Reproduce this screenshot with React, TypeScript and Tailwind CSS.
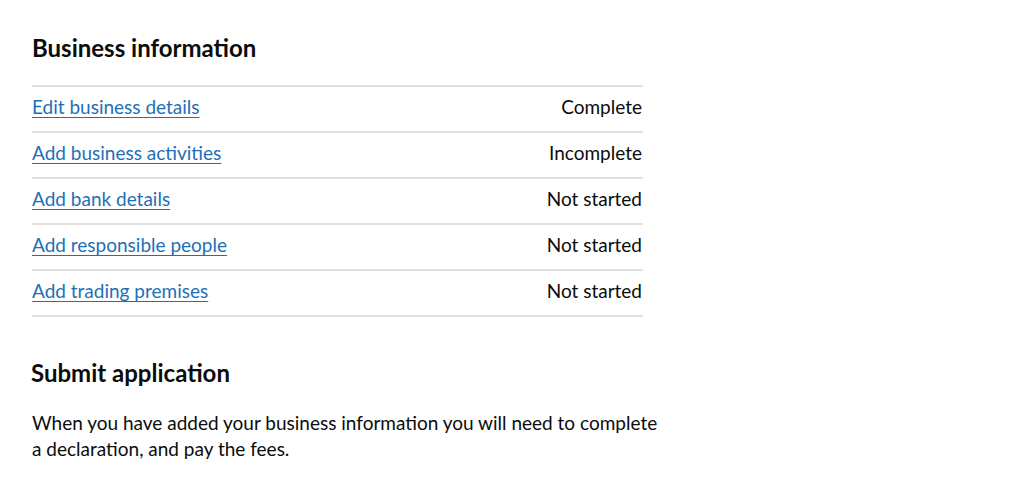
const FONT = "Lato, 'Liberation Sans', Arial, sans-serif";

const tasks = [
  { label: "Edit business details", status: "Complete" },
  { label: "Add business activities", status: "Incomplete" },
  { label: "Add bank details", status: "Not started" },
  { label: "Add responsible people", status: "Not started" },
  { label: "Add trading premises", status: "Not started" },
];

export default function App() {
  return (
    <div className="min-h-screen bg-white text-[#0b0c0c]" style={{ fontFamily: FONT }}>
      <div className="pl-[32px] pt-[33px] w-[643px]">
        <h2 className="text-[24px] leading-[30px] font-bold m-0">Business information</h2>
        <ul className="mt-[22px] border-t-2 border-[#e0e0e0]">
          {tasks.map((t) => (
            <li
              key={t.label}
              className="flex items-center justify-between h-[46px] pb-[3px] border-b-2 border-[#e0e0e0] text-[19px]"
            >
              <a
                href="#"
                className="text-[#1d70b8] underline decoration-1 underline-offset-[3px]"
              >
                {t.label}
              </a>
              <span className="pr-[1px]">{t.status}</span>
            </li>
          ))}
        </ul>
        <h2 className="mt-[41px] -ml-[1px] text-[24px] leading-[30px] font-bold">Submit application</h2>
        <p className="mt-[22px] w-[680px] text-[19px] leading-[26px]">
          When you have added your business information you will need to complete
          <br />
          a declaration, and pay the fees.
        </p>
      </div>
    </div>
  );
}
